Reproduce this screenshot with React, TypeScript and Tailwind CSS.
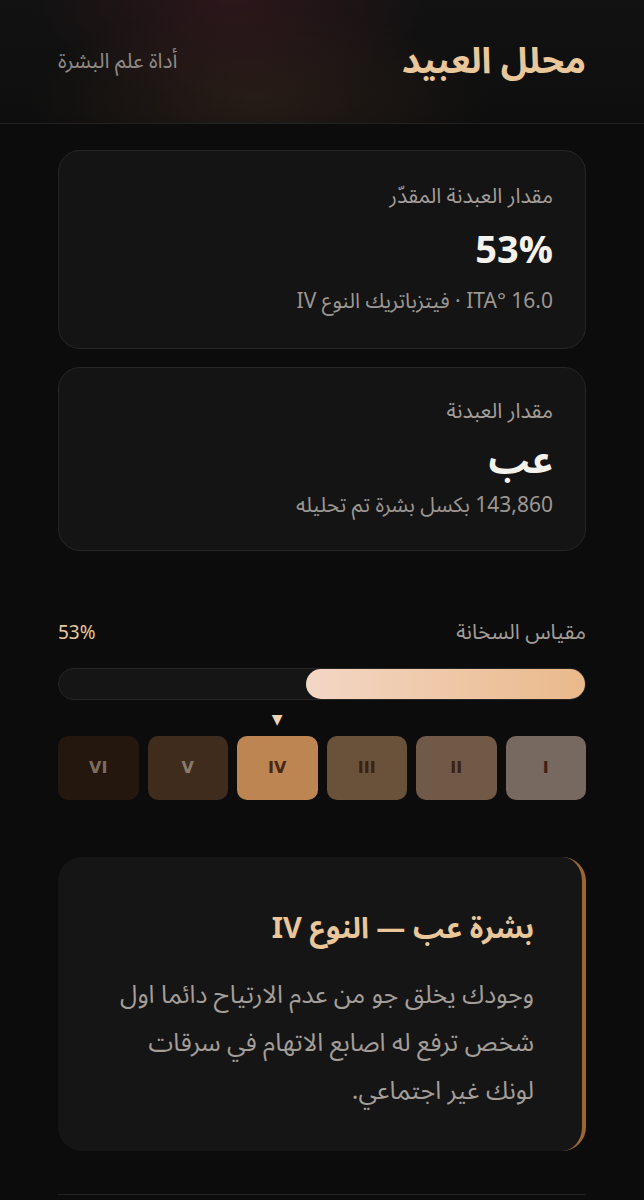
import React from 'react';

const FONT = { fontFamily: '"Noto Sans Arabic", "DejaVu Sans", "Noto Sans", sans-serif' };

const SWATCHES = [
  { label: 'I', bg: 'bg-[#776860]', text: 'text-[#3a2214]' },
  { label: 'II', bg: 'bg-[#705a47]', text: 'text-[#3a2214]' },
  { label: 'III', bg: 'bg-[#6a5139]', text: 'text-[#3a2214]' },
  { label: 'IV', bg: 'bg-[#bd8551]', text: 'text-[#4a2614]', active: true },
  { label: 'V', bg: 'bg-[#402c1c]', text: 'text-[#8c7b6a]' },
  { label: 'VI', bg: 'bg-[#24170e]', text: 'text-[#7d6d5d]' },
];

function StatCard({ label, value, sub, tall }: { label: string; value: string; sub: string; tall?: boolean }) {
  return (
    <div className={`rounded-[22px] border border-[#262626] bg-[#141414] px-8 ${tall ? 'pt-[31px] pb-[33px]' : 'pt-[29px] pb-[31px]'}`}>
      <div className="h-[28px] text-[21px] leading-[28px] text-[#a39e99]">{label}</div>
      <div className={`${tall ? 'mt-[17px] h-[48px]' : 'mt-[12px] h-[44px]'} text-[38px] font-bold leading-[48px] text-[#f5f2ec]`}>{value}</div>
      <div className={`${tall ? 'mt-[12px]' : 'mt-[10px]'} h-[28px] text-[21px] leading-[28px] text-[#9c9792]`}>{sub}</div>
    </div>
  );
}

export default function App() {
  const level = 53;

  return (
    <div dir="rtl" style={FONT} className="min-h-screen bg-[#0c0c0c] text-white">
      {/* header with soft glow */}
      <header className="h-[124px] border-b border-[#222] bg-[radial-gradient(ellipse_200px_100px_at_36%_0%,rgba(85,30,40,0.4),transparent),radial-gradient(ellipse_230px_90px_at_40%_80%,rgba(75,48,34,0.4),transparent),linear-gradient(#121212,#0e0e0e)]">
        <div className="flex h-full items-center justify-between px-[58px]">
          <h1 className="text-[36px] font-bold leading-none text-[#e9c79b]">محلل العبيد</h1>
          <span className="text-[21px] text-[#8f8a85]">أداة علم البشرة</span>
        </div>
      </header>

      <main className="px-[58px] pt-[26px]">
        <div className="flex flex-col gap-[18px]">
          <StatCard tall label="مقدار العبدنة المقدّر" value="53%" sub="16.0 °ITA · فيتزباتريك النوع IV" />
          <StatCard label="مقدار العبدنة" value="عب" sub="143,860 بكسل بشرة تم تحليله" />
        </div>

        {/* scale */}
        <section className="mt-[67px]">
          <div className="flex h-[30px] items-center justify-between">
            <span className="text-[21px] text-[#a39e99]">مقياس السخانة</span>
            <span className="text-[19px] text-[#e9c79b]">53%</span>
          </div>
          <div className="mt-[20px] h-[32px] rounded-full border border-[#262626] bg-[#151515]">
            <div
              className="h-full rounded-full bg-[linear-gradient(to_left,#eab98a,#f3d7c5)]"
              style={{ width: `${level}%` }}
            />
          </div>

          <div className="mt-[4px] grid grid-cols-6 gap-[9px]">
            {SWATCHES.map((s) => (
              <div key={s.label} className="flex flex-col items-center">
                <span className={`h-[32px] text-[14px] leading-[32px] text-[#edd3b2] ${s.active ? '' : 'invisible'}`}>▼</span>
                <div
                  className={`flex h-[64px] w-full items-center justify-center rounded-[10px] ${s.bg} ${s.text} text-[16px] font-bold`}
                  style={{ fontFamily: '"DejaVu Sans", sans-serif' }}
                >
                  {s.label}
                </div>
              </div>
            ))}
          </div>
        </section>

        {/* description */}
        <section className="mt-[57px] rounded-[24px] border-r-4 border-[#9a682f] bg-[#151515] px-12 pt-[48px] pb-[36px]">
          <h2 className="h-[48px] text-[29px] font-bold leading-[48px] text-[#e9c79b]">بشرة عب — النوع IV</h2>
          <p className="mt-[18px] text-[25px] leading-[48px] text-[#a39e99]">
            وجودك يخلق جو من عدم الارتياح دائما اول
            <br />
            شخص ترفع له اصابع الاتهام في سرقات
            <br />
            لونك غير اجتماعي.
          </p>
        </section>

        <div className="mt-[43px] border-t border-[#222]" />
      </main>
    </div>
  );
}
